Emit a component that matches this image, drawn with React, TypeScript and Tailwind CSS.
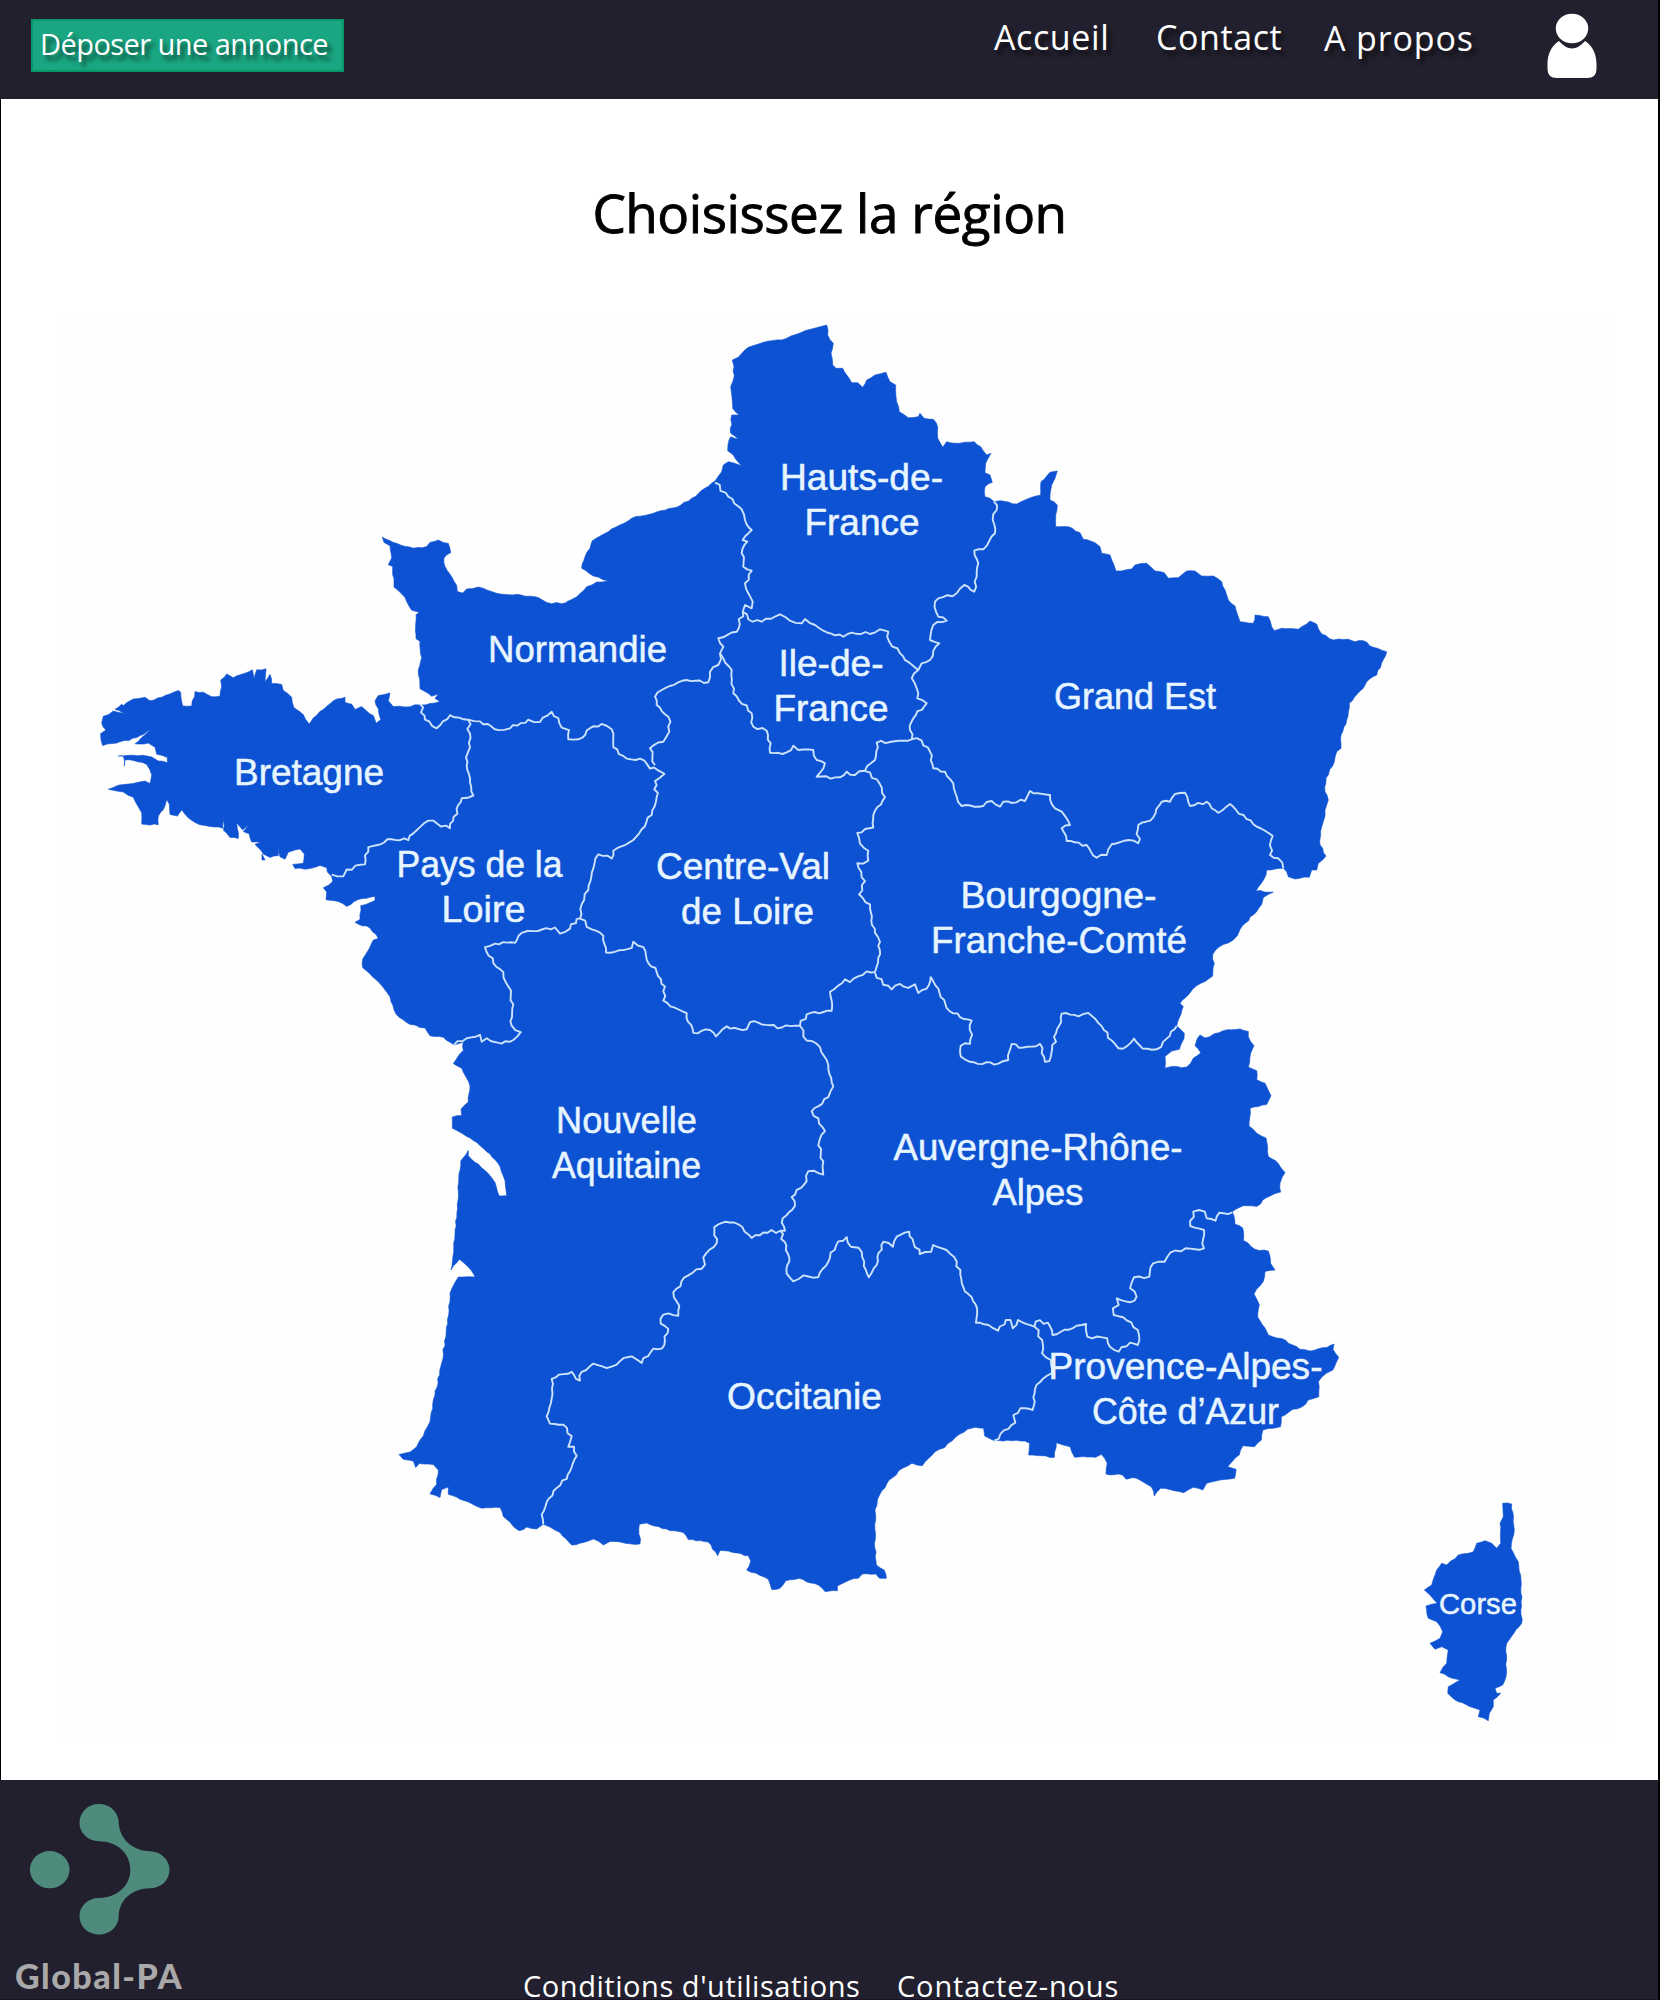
import React from "react";

type Tile = { x: number; y: number; sx: number; sy: number };

// Survey tiles: every run of points is stored in its tile's own grid.
const T: Record<string, Tile> = {
  A: { x: 560, y: 300, sx: 3, sy: 3 },
  B: { x: 940, y: 440, sx: 3, sy: 3 },
  C: { x: 90, y: 520, sx: 3, sy: 2.904 },
  D: { x: 480, y: 640, sx: 3, sy: 2.8 },
  E: { x: 860, y: 860, sx: 3, sy: 2.8 },
  F: { x: 380, y: 1020, sx: 3, sy: 2.8 },
  G: { x: 780, y: 1180, sx: 2.6133, sy: 3 },
  H: { x: 1380, y: 1480, sx: 3, sy: 3 },
};

type Run = [string, string];
type Pt = [number, number];

const toPoints = (runs: Run[]): Pt[] =>
  runs.flatMap(([k, s]) =>
    s
      .trim()
      .split(/\s+/)
      .map((p): Pt => {
        const [px, py] = p.split(",").map(Number);
        const t = T[k];
        return [t.x + px / t.sx, t.y + py / t.sy];
      }),
  );

const toPath = (pts: Pt[]) => "M" + pts.map(([x, y]) => `${x.toFixed(1)} ${y.toFixed(1)}`).join("L");

// Splits long stretches and nudges the new vertices for a natural, broken line.
const roughen = (pts: Pt[], step: number, amp: number): Pt[] => {
  const out: Pt[] = [pts[0]];
  let seed = 7;
  for (let i = 1; i < pts.length; i++) {
    const [x0, y0] = pts[i - 1];
    const [x1, y1] = pts[i];
    const len = Math.hypot(x1 - x0, y1 - y0);
    const n = Math.floor(len / step);
    for (let j = 1; j < n; j++) {
      seed = (seed * 16807) % 2147483647;
      const r = (seed / 2147483647 - 0.5) * 2 * amp;
      const t = j / n;
      out.push([x0 + (x1 - x0) * t - ((y1 - y0) / len) * r, y0 + (y1 - y0) * t + ((x1 - x0) / len) * r]);
    }
    out.push([x1, y1]);
  }
  return out;
};

const MAINLAND: Run[] = [
  ["A", "800,75 803,105 820,130 813,160 818,195 828,205 848,205 875,248 893,248 908,262 920,240 945,225 978,217 990,245 1007,255 1008,290 1018,335 1045,353 1075,350 1080,340 1092,355 1120,358 1133,380 1133,415 1148,442 1160,425 1200,430 1243,425 1262,440 1280,465 1293,460 1277,490 1275,518 1290,525 1297,547 1275,560 1275,590 1290,595 1302,605"],
  ["B", "180,182 230,192 260,178 302,165 303,125 330,97 352,93 345,115 335,135 330,180 352,195 347,225 347,260 385,260 420,278 430,298 465,308 480,320 485,340 510,345 522,375 528,393 575,387 585,375 620,370 645,393 673,398 685,415 715,413 740,393 765,393 785,408 820,408 845,425 855,450 865,480 885,498 900,545 940,550 945,525 985,530 995,560 1003,572 1025,565 1075,568 1110,543 1130,552 1145,582 1180,600 1225,598 1245,605 1270,602 1300,622 1340,635 1310,705 1280,725 1270,745 1228,790 1220,840 1203,885 1203,925 1190,935 1183,965 1158,1015 1155,1055 1165,1080 1155,1110 1150,1145 1145,1160 1140,1215 1158,1248 1135,1270 1130,1290 1115,1290 1108,1312 1065,1317 1045,1310 1040,1295 1030,1285 1005,1287 980,1290 978,1305 948,1353"],
  ["E", "1240,90 1210,105 1205,125 1140,195 1132,212 1105,232 1075,245 1058,265 1063,290 1058,325 1000,360 960,402 970,410 950,465 973,485 972,500 958,530 935,535 915,550 915,583 935,578 980,580 1000,555 1022,540 1005,520 1012,500 1020,490 1035,498 1090,478 1140,473 1165,480 1165,495 1182,520 1172,540 1165,580 1190,590 1190,615 1215,625 1233,660 1220,685 1170,695 1167,745 1190,765 1218,778 1225,830 1255,850 1275,875 1260,905 1262,930 1220,945 1190,970 1150,968 1117,985 1125,1020 1148,1030 1150,1065 1185,1090 1225,1095 1232,1130 1245,1148 1215,1152 1210,1180 1182,1215 1198,1245 1193,1280 1225,1330 1265,1340 1320,1370 1350,1375 1400,1365"],
  ["G", "1448,492 1445,508 1460,532 1445,570 1428,580 1407,605 1408,650 1380,660 1365,680 1340,688 1310,710 1308,740 1290,745 1262,750 1258,780 1240,800 1210,797 1200,825 1170,860 1192,868 1188,895 1150,900 1115,910 1105,930 1080,922 1055,938 1030,932 995,925 978,948 970,920 940,900 920,893 905,898 895,885 852,882 855,850 840,823 825,832 770,832 758,800 740,795 722,788 717,832 650,825 652,790 640,783 560,782 535,768 532,745 510,742 490,748 460,770 430,803 405,815 372,857 345,850 320,865 285,900 260,945 248,990 250,1020 247,1090 252,1155 272,1170 278,1195 260,1195 250,1182 215,1182 205,1195 182,1200 150,1218 150,1232 118,1235 100,1215 50,1195 15,1202 0,1225"],
  ["F", "1175,1595 1165,1566 1140,1555 1100,1540 1112,1515 1105,1500 1070,1492 1020,1485 1013,1500 985,1462 925,1455 910,1435 870,1430 800,1408 778,1412 780,1467 735,1465 690,1460 670,1470 640,1453 600,1465 575,1470 540,1435 510,1420 490,1412 470,1425 440,1420 418,1430 370,1390 360,1365 305,1367 240,1342 205,1328 205,1308 185,1315 180,1337 150,1327 170,1300 175,1260 160,1245 118,1242 107,1253 100,1235 70,1230 57,1217 90,1210 110,1195 130,1165 150,1125 165,1050 185,960 203,850 210,765 225,735 235,720 285,720 265,692 238,670 213,700 225,600 235,480 242,395 265,365 265,380 325,430 345,455 358,493 380,492 375,450 360,410 330,375 270,330 217,303 217,272 245,267 243,250 265,230 270,185 245,135 220,122 250,85 250,62 222,70"],
  ["C", "1092,1524 1060,1502 1020,1498 1005,1475 960,1465 918,1435 900,1385 875,1352 818,1300 818,1275 850,1220 865,1215 840,1185 795,1168 810,1160 812,1120 855,1105 855,1093 805,1102 770,1122 745,1108 708,1103 710,1080 700,1068 728,1050 725,1035 712,1022 710,1010 690,1003 660,1012 615,1012 608,1000 640,997 643,970 630,955 595,965 585,985 570,978 565,950 565,975 540,980 520,970 495,942 512,935 485,935 478,912 460,905 475,885 458,900 440,880 445,925 420,922 400,900 402,862 398,895 360,890 330,885 295,865 275,842 262,860 240,855 238,825 230,812 225,830 205,860 205,885 155,883 155,850 130,805 100,790 55,782 85,770 130,765 165,758 180,765 185,740 170,710 130,698 105,697 103,715 100,685 85,685 130,683 185,688 205,700 232,705 232,690 200,680 195,660 175,648 135,650 183,610 140,632 80,648 38,655 32,620 48,610 35,590 40,570 70,555 110,565 75,550 95,535 120,550 100,540 130,520 165,515 180,525 215,515 240,505 265,495 272,500 278,540 305,540 315,498 340,500 365,513 390,512 395,485 392,465 410,447 430,458 465,445 487,435 492,460 500,435 528,432 525,470 540,448 545,475 575,478 580,495 605,515 612,545 640,565 658,592 670,575 700,550 730,525 765,515 765,530 785,535 795,550 815,542 830,555 850,568 858,590 872,580 865,548 855,525 865,510 900,502 895,525 910,542 945,543 990,537 1020,533 1050,527 1035,518 1045,505 1025,512 990,490 985,435 995,400 990,350 1003,355 978,345 978,275 988,268 965,262 945,225 912,195 908,135 895,130 905,110 900,75 882,65 877,50 910,65 970,82 1010,77 1020,65 1045,58 1075,68 1082,95 1062,110 1065,135 1085,165 1100,190 1102,208 1118,212 1130,200 1165,195 1220,213 1330,222 1385,243 1430,240"],
  ["A", "20,905 50,890 80,860 110,846 145,842 100,828 65,805 75,770 90,745 97,722 145,695 215,655 280,640 350,622 395,595 465,543 485,515 490,495 505,485 545,497 520,465 503,452 507,420 512,410 535,418 512,400 515,345 538,345 518,325 512,260 520,240 522,200 517,180 535,172 565,142 635,122 680,115 735,92"],
];

const CORSE: Run[] = [
  ["H", "368,70 395,72 403,150 393,205 415,245 423,300 425,430 380,490 378,590 368,615 345,625 350,640 362,640 340,660 340,680 328,700 325,722 295,710 300,690 270,680 235,665 203,640 205,620 240,600 205,590 180,578 200,550 205,510 185,500 165,508 150,490 180,475 188,455 170,425 145,415 138,378 172,370 150,345 133,330 155,315 170,270 185,250 200,255 235,225 280,215 290,190 315,182 335,190 350,205 362,190 360,130 370,110"],
];

const BORDERS: Run[][] = [
  [["A", "465,548 505,590 545,628 555,660 575,690 548,720 562,725 548,745 550,800 575,812 555,850 565,880 578,905 575,925 555,915 548,935"]],
  [["A", "548,935 565,958 605,965 660,943 690,962 725,970 735,957 765,975 790,992 850,1010 875,998 930,1002 960,988 985,995 988,1025 1020,1060 1075,1110"]],
  [["A", "1302,605 1310,630 1298,660 1305,700 1270,748 1243,752 1255,790 1250,830 1243,875 1213,855 1190,880 1135,895 1125,905 1135,950 1160,962 1120,975 1110,1020 1138,1030 1110,1080 1085,1090 1075,1110 1055,1135 1070,1165 1072,1195 1100,1210 1060,1255 1050,1290 1055,1318 1030,1322 950,1328 945,1380 915,1412"]],
  [["A", "548,935 530,995 475,1015 490,1040 480,1060 490,1075 515,1110 520,1180 575,1240 580,1280 620,1292 632,1330 630,1358 680,1357 700,1337 715,1350 760,1350 770,1380 795,1390 770,1430 840,1432 860,1415 885,1425 915,1412"]],
  [["A", "480,1060 475,1095 450,1115 445,1147 380,1140 305,1170 285,1190 290,1215 325,1250 328,1295 310,1325 270,1345 285,1395"]],
  [
    ["C", "990,535 1005,580 1040,605 1080,567 1135,580 1170,585 1225,610 1260,605 1315,580 1350,587 1385,557 1405,575 1415,603 1437,610"],
    ["D", "265,278 295,278 330,247 365,235 395,250 400,300 440,332 480,332 510,360 522,357 553,375 525,395 530,440 515,490 460,560 400,590 395,612 355,600 340,640 325,700 305,740 300,780"],
  ],
  [["D", "290,780 300,780 335,810 370,828 378,875 455,862 460,845 490,860 500,895 530,930 555,970 550,1010 620,1045 640,1100 690,1092 708,1110 740,1082 800,1090 810,1070 905,1085 960,1080"]],
  [
    ["D", "290,780 270,808 240,822 225,805 160,815 125,820 105,848 45,850 15,860 40,905 70,930 85,970 100,1020 95,1080 122,1098 100,1120 65,1130 20,1115"],
    ["C", "1175,1515 1170,1495 1130,1505 1092,1524"],
  ],
  [["C", "1135,580 1140,660 1128,690 1140,750 1150,800 1115,808 1080,895 1015,873 970,910 955,930 905,927 835,950 825,1000 770,1015 760,1035 725,1030"]],
  [["D", "1155,367 1190,390 1215,440 1180,490 1180,525 1132,540 1140,570 1165,590 1165,618 1132,625 1155,675 1137,712 1170,740 1185,820 1200,845 1195,890 1185,930"]],
  [["D", "960,1080 980,1048 1055,1038 1050,985 1095,950 1110,958 1160,928 1185,930"]],
  [
    ["A", "1055,1318 1085,1322 1110,1355 1120,1405 1155,1415 1180,1450"],
    ["B", "50,1070 65,1098 130,1098 155,1083 180,1100 190,1085 255,1083 270,1053 330,1065 345,1105 365,1115 390,1155 365,1165 380,1203 440,1215 470,1253 500,1245 515,1213 565,1200 595,1210 595,1155 640,1132 665,1085 690,1085 705,1062 735,1058 750,1098 800,1085 835,1118 870,1092 950,1160 998,1188 990,1245 1015,1255 1030,1285"],
  ],
  [["E", "45,315 50,330 95,362 120,347 145,358 165,348 175,372 200,360 212,328 235,360 260,415 300,440 335,450 330,515 302,520 302,550 330,565 415,570 445,560 455,515 490,525 540,515 545,540 555,565 568,563 605,430 655,438 685,428 725,465 755,505 775,527 800,522 822,500 848,528 890,530 920,500 950,465"]],
  [
    ["D", "960,1080 970,1110 1020,1140 1045,1190 1060,1250 1045,1280 995,1320 1035,1375 1015,1415 1030,1460 1030,1497 985,1487 980,1515 935,1560"],
    ["F", "1245,520 1208,555 1215,590 1200,590"],
  ],
  [["F", "1200,590 1150,595 1115,610 1075,572 1035,565 1003,580 1010,625 970,665 975,685 925,715 880,762 898,800 895,828 850,825 842,850 865,865 845,920 820,920 785,960 755,942 720,955 680,975 640,962 605,985 600,1010 575,985 515,1005 515,1060 500,1110 510,1130 550,1133 575,1165 565,1195 582,1195 590,1220 560,1285 530,1310 500,1350 485,1385 490,1412"]],
  [
    ["F", "1200,590 1228,665 1220,710 1240,732 1270,715 1315,720 1350,665 1375,620 1400,608"],
    ["G", "185,200 205,203 220,245 232,292 245,265 270,185 295,200 305,170 338,155 365,222 395,215 400,195 435,210 462,245 475,310 515,385 512,428 545,435 570,452 590,420 602,420 608,445 622,420 665,440"],
  ],
  [["G", "665,440 685,480 685,520 708,540 710,580 670,615 660,690 628,685 610,705 615,728 560,782"]],
  [["G", "665,440 668,425 700,428 712,465 775,437 800,432 803,470 855,475 862,500 885,515 915,488 935,495 935,450 918,427 872,405 870,385 885,375 880,355 915,367 932,350 915,325 925,292 965,290 975,250 1005,245 1020,218 1060,205 1108,205 1108,150 1072,138 1080,95 1110,95 1115,115 1138,122 1148,98 1182,97"]],
];

// [text, centre x, baseline y, width]
const LABELS: [string, number, number, number][] = [
  ["Hauts-de-", 861.5, 490, 163],
  ["France", 862, 535, 115],
  ["Normandie", 577.5, 661.5, 179],
  ["Ile-de-", 831, 676, 105],
  ["France", 831, 721, 115],
  ["Grand Est", 1135, 708.5, 162],
  ["Bretagne", 309, 784.5, 150],
  ["Pays de la", 479.5, 877, 166],
  ["Loire", 483.5, 922, 84],
  ["Centre-Val", 743, 879, 174],
  ["de Loire", 747.5, 924, 133],
  ["Bourgogne-", 1058.5, 908, 196],
  ["Franche-Comté", 1059, 953, 256],
  ["Nouvelle", 626.5, 1133, 141],
  ["Aquitaine", 626.5, 1178, 149],
  ["Auvergne-Rhône-", 1038, 1160, 289],
  ["Alpes", 1038, 1205, 91],
  ["Occitanie", 804.5, 1409, 155],
  ["Provence-Alpes-", 1185.5, 1379, 274],
  ["Côte d’Azur", 1185.5, 1423.5, 187],
];

function FranceMap() {
  return (
    <svg viewBox="63 318 1547 1420" className="block h-[1420px] w-[1547px] shrink-0">
      <g fill="#0d52d2" stroke="#0d52d2" strokeWidth="0.6" strokeLinejoin="round">
        <path d={toPath(roughen(toPoints(MAINLAND), 4, 0.8)) + "Z"} />
        <path d={toPath(roughen(toPoints(CORSE), 4, 0.8)) + "Z"} />
        <path d="M262 854l3 6h-3zM121 739h2v2h-2z" />
      </g>
      <g fill="none" stroke="#cce3fc" strokeWidth="1.9" strokeLinejoin="round">
        {BORDERS.map((b, i) => (
          <path key={i} d={toPath(roughen(toPoints(b), 4, 1.9))} />
        ))}
      </g>
      <g
        fill="#e6f5ff"
        stroke="#e6f5ff"
        strokeWidth="0.5"
        textAnchor="middle"
        className="font-['Liberation_Sans',sans-serif] text-[37.5px]"
      >
        {LABELS.map(([t, x, y, w], i) => (
          <text key={i} x={x} y={y} textLength={w} lengthAdjust="spacingAndGlyphs">
            {t}
          </text>
        ))}
        <text x="1478" y="1614" textLength="78" lengthAdjust="spacingAndGlyphs" className="text-[29px]">
          Corse
        </text>
      </g>
    </svg>
  );
}

function UserIcon() {
  return (
    <svg viewBox="0 0 50 66" className="h-[66px] w-[50px]" fill="#fff">
      <path d="M12 28Q25 43 38 28C46 33 49.500 42 49.500 51V56Q49.500 65 40 65H10Q.5 65 .5 56V51C.5 42 4 33 12 28Z" />
      <ellipse cx="25" cy="16" rx="17.500" ry="17" fill="#22202e" />
      <ellipse cx="25" cy="15.500" rx="16.200" ry="14.800" />
    </svg>
  );
}

function Logo() {
  return (
    <svg viewBox="29 1803 141 133" className="h-[133px] w-[141px]" fill="#4e8b7c">
      <ellipse cx="49.700" cy="1869.700" rx="19.800" ry="18.600" />
      <path d="M99 1804C110 1804 118.700 1812 118.700 1823C119.500 1838 132 1851 150 1851.300C161 1851.500 169.500 1860 169.500 1869.700C169.500 1880 161 1888.200 150 1888.300C132 1888.500 119 1900 118.700 1916C118.700 1926.500 110 1934.500 99 1934.500C88 1934.500 79.500 1926.500 79.500 1916C79.500 1906 88 1898 99 1898C117 1897.500 130.300 1886 130.300 1869.700C130.300 1853 117 1841.500 99 1841.300C88 1841 79.500 1833 79.500 1823C79.500 1812 88 1804 99 1804Z" />
    </svg>
  );
}

const NAV_LINK = "block whitespace-nowrap leading-[48px] text-[34px] [text-shadow:4px_5px_4px_rgba(0,0,0,0.6)]";

export default function App() {
  return (
    <div className="flex h-[2000px] w-[1660px] flex-col overflow-hidden border-r-2 border-black bg-white font-['Open_Sans',sans-serif] text-white">
      <header className="flex h-[99px] shrink-0 items-start bg-[#22202e]">
        <button className="mt-[19px] ml-[31px] flex h-[53px] w-[313px] items-start border-2 border-[#05976a] bg-[#1aa682] pl-[7px] text-[29px] leading-[46px] tracking-[-0.55px] whitespace-nowrap [text-shadow:4px_5px_4px_rgba(0,0,0,0.55)]">
          <span>Déposer une annonce</span>
        </button>
        <nav className="ml-[650px] flex">
          <a className={NAV_LINK + " mt-[13px] w-[162px] tracking-[0.6px]"}>Accueil</a>
          <a className={NAV_LINK + " mt-[13px] w-[168px] tracking-[0.6px]"}>Contact</a>
          <a className={NAV_LINK + " mt-[14px] w-[223px] tracking-[0.85px]"}>A propos</a>
        </nav>
        <button className="mt-[13px]">
          <UserIcon />
        </button>
      </header>
      <main className="flex h-[1681px] shrink-0 flex-col border-l border-black">
        <h1 className="mt-[78px] h-[72px] text-center text-[53px] leading-[72px] tracking-[-0.45px] text-black [-webkit-text-stroke:0.9px_#000]">
          Choisissez la région
        </h1>
        <div className="mt-[69px] ml-[62px] flex w-[1547px] bg-[#fefefe]">
          <FranceMap />
        </div>
      </main>
      <footer className="flex h-[220px] shrink-0 items-start border-b border-[#1b1226] bg-[#22202e]">
        <div className="mt-[23px] ml-[14px] w-[509px]">
          <div className="ml-[15px]">
            <Logo />
          </div>
          <p className="mt-[19px] ml-px font-['Lato',sans-serif] text-[34px] leading-[42px] font-black tracking-[1.5px] text-[#a9a9a9]">
            Global-PA
          </p>
        </div>
        <a className="mt-[193px] w-[374px] text-[29px] leading-[26px] tracking-[0.55px] whitespace-nowrap">Conditions d'utilisations</a>
        <a className="mt-[193px] text-[29px] leading-[26px] tracking-[0.85px] whitespace-nowrap">Contactez-nous</a>
      </footer>
    </div>
  );
}
